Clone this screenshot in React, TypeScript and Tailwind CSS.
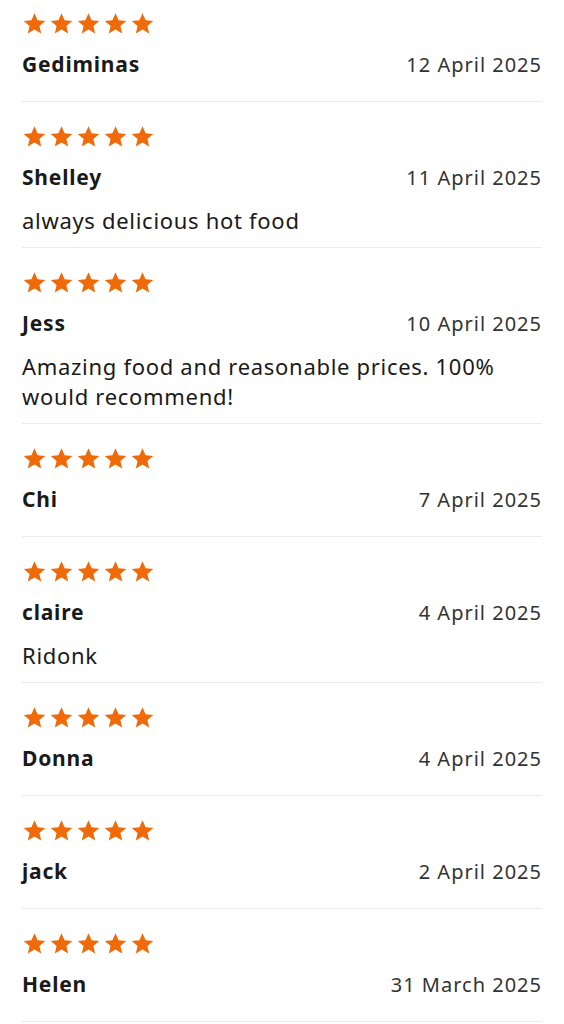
import React from 'react';

interface Review {
  name: string;
  date: string;
  text?: string;
}

const reviews: Review[] = [
  { name: 'Gediminas', date: '12 April 2025' },
  { name: 'Shelley', date: '11 April 2025', text: 'always delicious hot food' },
  { name: 'Jess', date: '10 April 2025', text: 'Amazing food and reasonable prices. 100% would recommend!' },
  { name: 'Chi', date: '7 April 2025' },
  { name: 'claire', date: '4 April 2025', text: 'Ridonk' },
  { name: 'Donna', date: '4 April 2025' },
  { name: 'jack', date: '2 April 2025' },
  { name: 'Helen', date: '31 March 2025' },
];

function Star() {
  return (
    <svg width="25" height="24" viewBox="0 0 24 24" className="shrink-0">
      <path
        d="M12 1.2l3.1 7.1 7.7.6-5.9 5.1 1.8 7.6L12 17.6l-6.7 4 1.8-7.6-5.9-5.1 7.7-.6z"
        fill="#f06a0a"
      />
    </svg>
  );
}

function ReviewItem({ review, first }: { review: Review; first: boolean }) {
  return (
    <div className={`border-b border-[#ebebeb] ${first ? 'pt-[12px]' : 'pt-[23px]'} ${review.text ? 'pb-[12px]' : 'pb-[22px]'}`}>
      <div className="flex gap-[2px]">
        {[0, 1, 2, 3, 4].map((i) => (
          <Star key={i} />
        ))}
      </div>
      <div className="flex items-center justify-between mt-[15px] h-[28px]">
        <span className="text-[21px] font-bold text-[#1a1a1a] tracking-[0.8px]">{review.name}</span>
        <span className="text-[20px] text-[#333333] tracking-[1px]">{review.date}</span>
      </div>
      {review.text && (
        <p className="mt-[13px] text-[22px] leading-[30px] text-[#1a1a1a] tracking-[0.7px]">{review.text}</p>
      )}
    </div>
  );
}

export default function App() {
  return (
    <div className="min-h-screen bg-white px-[22px]" style={{ fontFamily: '"Noto Sans", "Open Sans", sans-serif' }}>
      {reviews.map((r, i) => (
        <ReviewItem key={r.name + i} review={r} first={i === 0} />
      ))}
    </div>
  );
}
